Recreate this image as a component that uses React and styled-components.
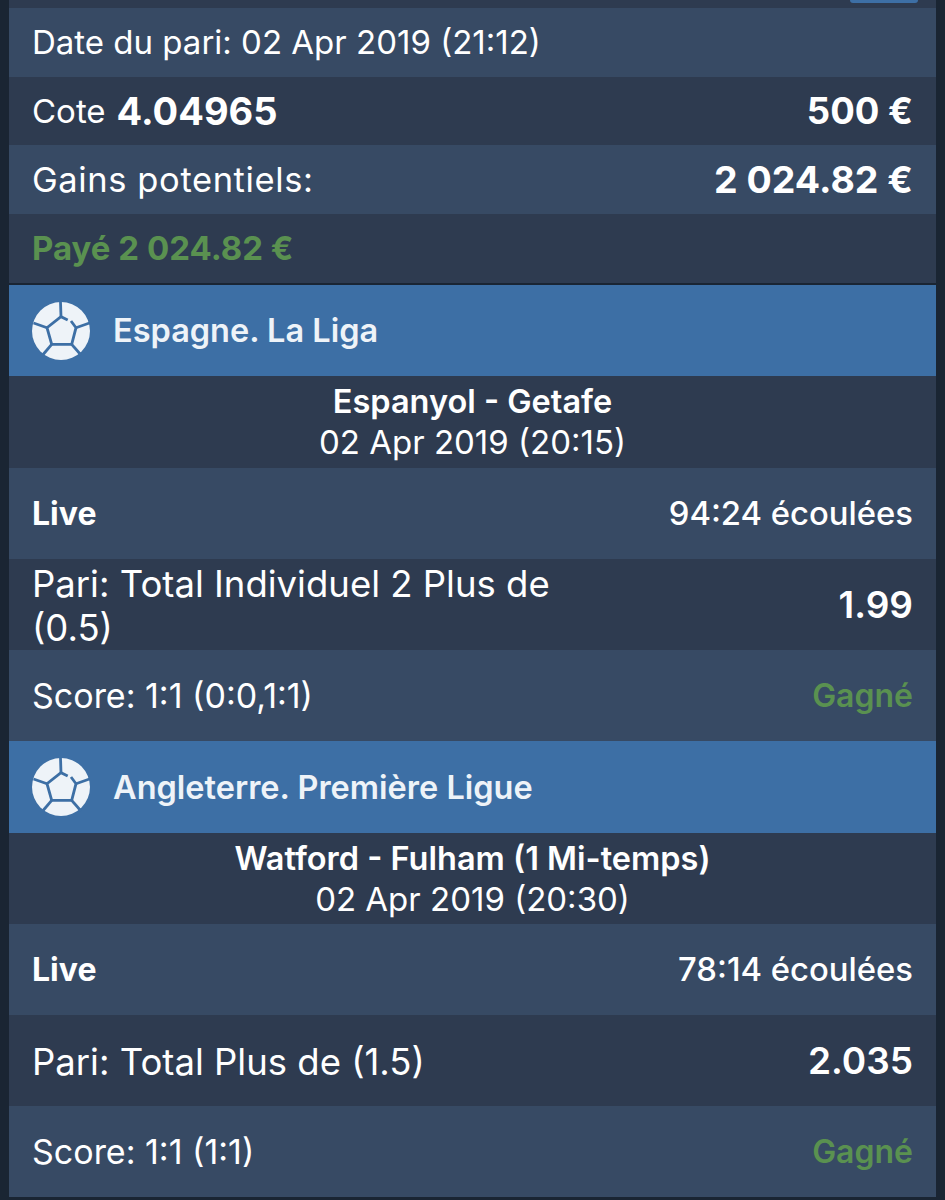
import styled, { createGlobalStyle } from 'styled-components';

const GlobalStyle = createGlobalStyle`
  html, body {
    margin: 0;
    padding: 0;
    background: #1a2533;
  }
  body {
    font-family: Inter, "Liberation Sans", sans-serif;
    color: #fff;
  }
`;

const Page = styled.div`
  width: 945px;
  height: 1200px;
  overflow: hidden;
  box-sizing: border-box;
  padding: 0 9px;
  background: #1a2533;
`;

const TopStrip = styled.div`
  height: 8px;
  background: #2e3b50;
  display: flex;
  justify-content: flex-end;
  padding-right: 18px;
`;

const TopButton = styled.div`
  width: 68px;
  height: 3px;
  background: #3d6fa5;
  border-radius: 0 0 4px 4px;
`;

const Row = styled.div`
  box-sizing: border-box;
  height: ${(p) => p.$h}px;
  padding: 0 23px 0 24px;
  display: flex;
  align-items: center;
  justify-content: space-between;
  background: ${(p) => (p.$dark ? '#2e3b50' : '#374a64')};
  line-height: 41px;
`;

const Label = styled.span`
  font-size: ${(p) => p.$size || 33}px;
  font-weight: ${(p) => p.$weight || 400};
  letter-spacing: ${(p) => p.$spacing || 0}px;
  margin-left: -1px;
`;

const Strong = styled.span`
  font-size: ${(p) => p.$size || 37.5}px;
  font-weight: 700;
`;

const Odds = styled(Strong)`
  margin-left: 11px;
`;

const Left = styled.div`
  display: flex;
  align-items: center;
`;

const Paid = styled.span`
  font-size: 33px;
  font-weight: 700;
  color: #5a9150;
  margin-left: -1px;
`;

const Won = styled.span`
  font-size: 32px;
  font-weight: 600;
  color: #5a9150;
`;

const Divider = styled.div`
  height: 2px;
  background: #1a2533;
`;

const LeagueHeader = styled.div`
  box-sizing: border-box;
  height: ${(p) => p.$h}px;
  padding-left: 23px;
  display: flex;
  align-items: center;
  gap: 23px;
  background: #3d6fa5;
  font-size: 32.5px;
  font-weight: 600;
  color: #eef3f8;
`;

const Match = styled.div`
  box-sizing: border-box;
  height: ${(p) => p.$h}px;
  display: flex;
  flex-direction: column;
  align-items: center;
  justify-content: center;
  background: #2e3b50;
  font-size: 33px;
  line-height: 41px;
`;

const Teams = styled.div`
  font-size: 32.5px;
  font-weight: 600;
`;

const BetName = styled.div`
  width: 560px;
  margin-left: -1px;
  padding-top: 3px;
  font-size: 36.5px;
  line-height: 44px;
`;

const Value = styled.span`
  font-size: 37px;
  font-weight: 600;
`;

function BallIcon() {
  return (
    <svg width="58" height="58" viewBox="0 0 58 58" aria-hidden="true">
      <circle cx="29" cy="29" r="29" fill="#eef3f8" />
      <g fill="none" stroke="#3d6fa5" strokeWidth="2.8">
        <path d="M39 19 L44 25.7 L39.7 42.3 L19.7 42.3 L15 25.7 L29 14.7 L35.7 18" />
        <path d="M29 14.7 L28.5 0" />
        <path d="M44 25.7 L57.5 21" />
        <path d="M39.7 42.3 L49 53" />
        <path d="M19.7 42.3 L10.7 53" />
        <path d="M15 25.7 L1.5 21" />
      </g>
    </svg>
  );
}

function Bet({ league, teams, date, elapsed, bet, odds, score, big }) {
  const rowH = 91;
  return (
    <>
      <LeagueHeader $h={big ? 92 : 91}>
        <BallIcon />
        {league}
      </LeagueHeader>
      <Match $h={big ? 91 : 92}>
        <Teams>{teams}</Teams>
        <div>{date}</div>
      </Match>
      <Row $h={rowH}>
        <Label $size={32} $weight={700}>Live</Label>
        <Label $size={32.8} $weight={500}>{elapsed}</Label>
      </Row>
      <Row $h={rowH} $dark>
        <BetName>{bet}</BetName>
        <Value>{odds}</Value>
      </Row>
      <Row $h={rowH}>
        <Label $size={34}>{score}</Label>
        <Won>Gagné</Won>
      </Row>
    </>
  );
}

export default function App() {
  return (
    <Page>
      <GlobalStyle />
      <TopStrip>
        <TopButton />
      </TopStrip>
      <Row $h={69}>
        <Label>Date du pari: 02 Apr 2019 (21:12)</Label>
      </Row>
      <Row $h={68} $dark>
        <Left>
          <Label>Cote</Label>
          <Odds $size={38}>4.04965</Odds>
        </Left>
        <Strong $size={36.5}>500 €</Strong>
      </Row>
      <Row $h={69}>
        <Label $size={34.5} $spacing={0.6}>Gains potentiels:</Label>
        <Strong>2 024.82 €</Strong>
      </Row>
      <Row $h={69} $dark>
        <Paid>Payé 2 024.82 €</Paid>
      </Row>
      <Divider />
      <Bet
        league="Espagne. La Liga"
        teams="Espanyol - Getafe"
        date="02 Apr 2019 (20:15)"
        elapsed="94:24 écoulées"
        bet="Pari: Total Individuel 2 Plus de (0.5)"
        odds="1.99"
        score="Score: 1:1 (0:0,1:1)"
      />
      <Bet
        big
        league="Angleterre. Première Ligue"
        teams="Watford - Fulham (1 Mi-temps)"
        date="02 Apr 2019 (20:30)"
        elapsed="78:14 écoulées"
        bet="Pari: Total Plus de (1.5)"
        odds="2.035"
        score="Score: 1:1 (1:1)"
      />
    </Page>
  );
}
